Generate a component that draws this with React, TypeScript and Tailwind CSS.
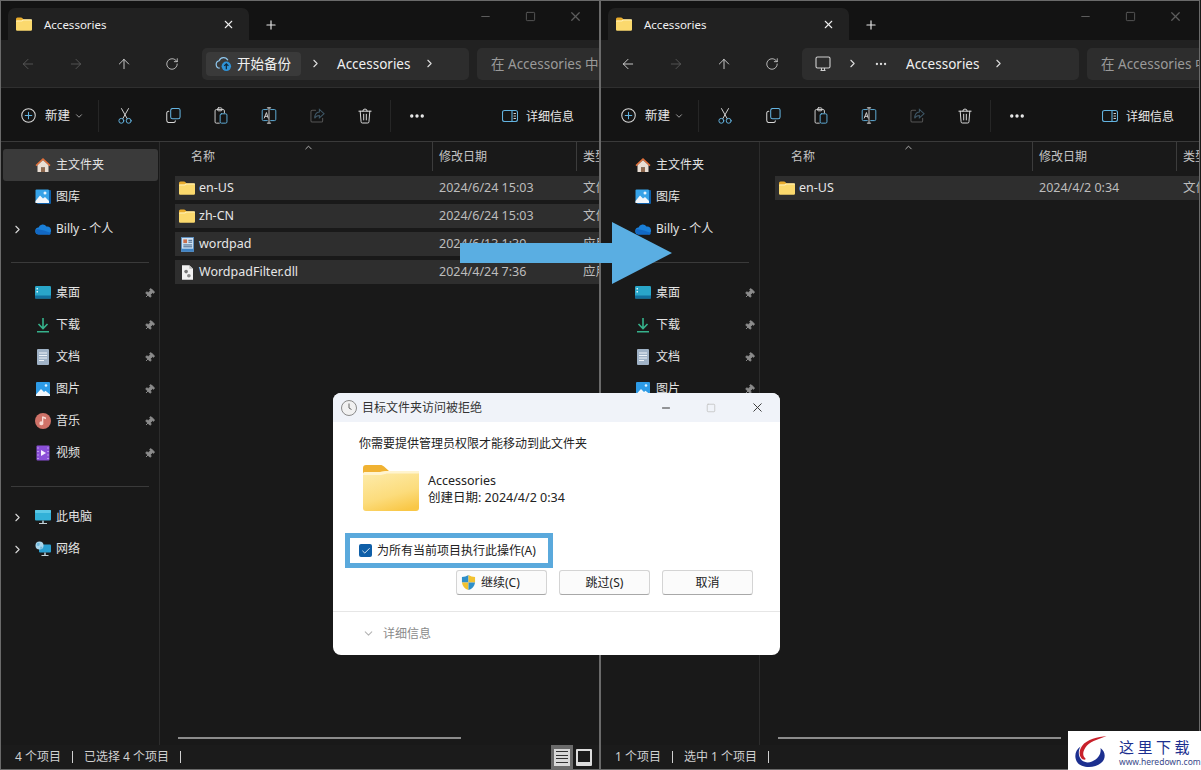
import React from 'react';
import { X, Plus, Minus, Square, ArrowLeft, ArrowRight, ArrowUp, RotateCw, ChevronRight, ChevronDown, ChevronUp, Ellipsis, Pin, Check } from 'lucide-react';

const Folder = ({ className }: { className: string }) => (
  <svg viewBox="0 0 16 14" className={className}>
    <path d="M0 2a1.5 1.5 0 0 1 1.5-1.5h3.6c.5 0 .8.2 1.1.5L7.6 2.4H14.5A1.5 1.5 0 0 1 16 3.900V6H0z" fill="#e9ac2c" />
    <path d="M0 4.200c0-.5.3-.8.8-.8H5.500L7 2.600h7.500c.9 0 1.500.6 1.500 1.400v8.500c0 .8-.6 1.300-1.500 1.300H1.500C.6 13.800 0 13.300 0 12.500z" fill="#fbd96d" />
    <path d="M0 4.200c0-.5.3-.8.8-.8H5.500L7 2.600h9v1H7.400L5.900 4.400H0z" fill="#fff1b8" />
  </svg>
);

const BigFolder = () => (
  <svg viewBox="0 0 56 46" className="w-[56px] h-[46px]">
    <defs>
      <linearGradient id="bigFolderFill" x1="0.300" y1="0" x2="0.700" y2="1">
        <stop offset="0" stopColor="#fdeaa6" />
        <stop offset="0.600" stopColor="#fcdc7c" />
        <stop offset="1" stopColor="#f9c746" />
      </linearGradient>
    </defs>
    <path d="M0 3a3 3 0 0 1 3-3h14c2 0 3 .6 4 1.500L26 6h27a3 3 0 0 1 3 3v6H0z" fill="#f0b232" />
    <path d="M0 9c0-1 .8-2 2-2h15l6-1h30a3 3 0 0 1 3 3v34a3 3 0 0 1-3 3H3a3 3 0 0 1-3-3z" fill="url(#bigFolderFill)" />
    <path d="M0 9c0-1 .8-2 2-2h15l6-1h33v2.500H24l-6 1.500H0z" fill="#fff4cf" />
  </svg>
);

const Home = () => (
  <svg viewBox="0 0 16 16" className="w-4 h-4">
    <path d="M8 1 .5 8l1 1.200L8 3.300l6.500 5.900 1-1.200z" fill="#e2703a" />
    <path d="M2.500 8.200 8 3.300l5.500 4.900V15H10v-4.500H6V15H2.500z" fill="#eadfd5" />
    <rect x="6" y="10.500" width="4" height="4.500" fill="#8f6a50" />
  </svg>
);

const Gallery = () => (
  <svg viewBox="0 0 16 16" className="w-4 h-4">
    <rect x="2" y="1" width="14" height="14" rx="1" fill="#0f5fa8" />
    <rect x="0.500" y="0.500" width="13.500" height="13.500" rx="1" fill="#36a2e8" />
    <path d="M.5 12 5 6.500l3 3 2-1.500 4 4v2H.5z" fill="#f2f6fa" />
    <circle cx="10" cy="4" r="1.500" fill="#e6f4ff" />
  </svg>
);

const Cloud = () => (
  <svg viewBox="0 0 16 10" className="w-4 h-[11px]">
    <path d="M4 10a3.500 3.500 0 0 1-.5-7A4.500 4.500 0 0 1 11.500 2 3.800 3.800 0 0 1 12.500 10z" fill="#1a7fd8" />
    <path d="M3.500 10a3 3 0 0 1-1.500-5.500L9 6l7 2.500a2.500 2.500 0 0 1-3.500 1.500z" fill="#1268c4" />
  </svg>
);

const Desktop = () => (
  <svg viewBox="0 0 16 14" className="w-4 h-[14px]">
    <rect width="16" height="12.500" rx="1.200" fill="#29a6c9" />
    <rect y="9.500" width="16" height="3" fill="#12709e" />
    <rect x="1.500" y="2" width="1.500" height="1.500" fill="#d8f3fa" />
    <rect x="1.500" y="5" width="1.500" height="1.500" fill="#d8f3fa" />
  </svg>
);

const Download = () => (
  <svg viewBox="0 0 16 16" className="w-4 h-4" fill="none" stroke="#36b28c" strokeWidth="1.600">
    <path d="M8 1v10M3.500 7 8 11.500 12.500 7M2 14.800h12" />
  </svg>
);

const Docs = () => (
  <svg viewBox="0 0 16 16" className="w-4 h-4">
    <rect x="2" y="0" width="12" height="16" rx="1" fill="#9fb2c6" />
    <path d="M4 4h8M4 6.500h8M4 9h8M4 11.500h5" stroke="#eef3f8" strokeWidth="1" />
  </svg>
);

const Pictures = () => (
  <svg viewBox="0 0 16 16" className="w-4 h-4">
    <rect x="1" y="1" width="14" height="14" rx="1" fill="#2d9be6" />
    <path d="M1 13.500 6 8l3 3 1.500-1.200L15 13.500V15H1z" fill="#f3f7fb" />
    <circle cx="11" cy="4.500" r="1.300" fill="#dff1ff" />
  </svg>
);

const Music = () => (
  <svg viewBox="0 0 16 16" className="w-4 h-4">
    <circle cx="8" cy="8" r="8" fill="#cf7268" />
    <path d="M8.300 3.500v6.300a2 2 0 1 1-1.300-1.400V3.500zM8.300 3.500l2.700 1v1.800l-2.700-1z" fill="#f7dcd6" />
  </svg>
);

const Video = () => (
  <svg viewBox="0 0 16 16" className="w-4 h-4">
    <rect x="1.500" y="0.500" width="13" height="15" rx="1" fill="#8a4fd8" />
    <path d="M6 5v6l5-3z" fill="#f6f0ff" />
    <path d="M3 2.500v1M3 6v1M3 9.500v1M3 13v1M13 2.500v1M13 6v1M13 9.500v1M13 13v1" stroke="#d9c6f5" strokeWidth="1.200" />
  </svg>
);

const Computer = () => (
  <svg viewBox="0 0 16 16" className="w-4 h-4">
    <rect y="1" width="16" height="10.500" rx="1" fill="#33b1d8" />
    <rect y="1" width="16" height="3" rx="1" fill="#5cc8e6" />
    <rect x="7" y="11.500" width="2" height="2.500" fill="#8fa4ae" />
    <rect x="4" y="14" width="8" height="1" fill="#c4d0d6" />
  </svg>
);

const Network = () => (
  <svg viewBox="0 0 16 16" className="w-4 h-4">
    <rect x="4" y="3.500" width="12" height="8" rx="1" fill="#2a9fd0" />
    <rect x="9" y="11.500" width="2" height="2.500" fill="#8fa4ae" />
    <rect x="6.500" y="14" width="7" height="1" fill="#c4d0d6" />
    <circle cx="4.500" cy="4.500" r="4" fill="#a9d6ec" />
    <path d="M2.500 1.500 5 2.500 4 5 1.500 4.500zM5.500 5.500l2 .5-1 2-1.500-.5z" fill="#6fb8dc" />
  </svg>
);

const WordpadIcon = () => (
  <svg viewBox="0 0 14 16" className="w-[13px] h-[15px]">
    <rect x="0.500" y="0.500" width="13" height="15" fill="#cfe3f5" stroke="#5d8fc0" />
    <rect x="2.500" y="2.500" width="4" height="4" fill="#c9704e" />
    <path d="M8 3.500h4M8 5.500h4M2.500 8.500h9.500M2.500 10.500h9.500" stroke="#37577e" strokeWidth="1" />
    <rect x="0.500" y="12.500" width="13" height="3" fill="#3f83c4" />
  </svg>
);

const DllIcon = () => (
  <svg viewBox="0 0 12 16" className="w-[11px] h-[15px]">
    <path d="M0 0h8l4 4v12H0z" fill="#f2f2f2" />
    <path d="M8 0v4h4z" fill="#bdbdbd" />
    <circle cx="4.500" cy="7" r="2" fill="#777" />
    <circle cx="7.500" cy="11.500" r="2" fill="#8a8a8a" />
  </svg>
);

const BackupIcon = () => (
  <svg viewBox="0 0 18 18" className="w-[17px] h-[17px]" fill="none">
    <path d="M5 14a4 4 0 0 1-.6-7.900 5 5 0 0 1 9.200-.6" stroke="#8fc7ee" strokeWidth="1.300" />
    <circle cx="12" cy="12" r="5" fill="#2f93d8" />
    <path d="M12 15V9.500M9.800 11.500 12 9.300l2.200 2.200" stroke="#10293c" strokeWidth="1.300" />
  </svg>
);

const Monitor = () => (
  <svg viewBox="0 0 16 16" className="w-4 h-4" fill="none" stroke="#d0d0d0" strokeWidth="1.100">
    <rect x="1" y="1" width="14" height="11" rx="1.500" />
    <path d="M5.500 14.500h5M6.500 12v2.500M9.500 12v2.500" />
  </svg>
);

const stroke = { fill: 'none', strokeWidth: 1.100, strokeLinecap: 'round' as const };

const CutIcon = () => (
  <svg viewBox="0 0 16 20" className="w-[14px] h-[18px]" {...stroke}>
    <path d="M4 1.500 10.500 13M12 1.500 5.500 13" stroke="#d8d8d8" />
    <circle cx="3.800" cy="15.500" r="2.800" stroke="#63b3e0" />
    <circle cx="12.200" cy="15.500" r="2.800" stroke="#63b3e0" />
  </svg>
);

const CopyIcon = () => (
  <svg viewBox="0 0 16 16" className="w-[15px] h-[15px]" {...stroke}>
    <rect x="5" y="0.500" width="10" height="11" rx="2" stroke="#63b3e0" />
    <path d="M3 3.500h-.2A2 2 0 0 0 .8 5.500V13a2.500 2.500 0 0 0 2.500 2.500H8a2 2 0 0 0 2-2" stroke="#d8d8d8" />
  </svg>
);

const PasteIcon = () => (
  <svg viewBox="0 0 16 20" className="w-[14px] h-[17px]" {...stroke}>
    <path d="M6 19H2.500A1.500 1.500 0 0 1 1 17.500V4.500A1.500 1.500 0 0 1 2.500 3h8A1.500 1.500 0 0 1 12 4.500V7" stroke="#d8d8d8" />
    <rect x="4" y="1" width="5" height="3.500" rx="1" stroke="#d8d8d8" />
    <rect x="7" y="8" width="8" height="11" rx="1.500" stroke="#63b3e0" />
  </svg>
);

const RenameIcon = () => (
  <svg viewBox="0 0 18 20" className="w-[16px] h-[17px]" {...stroke}>
    <path d="M7 3H2.500A1.500 1.500 0 0 0 1 4.500v10A1.500 1.500 0 0 0 2.500 16H7M11 3h4.500A1.500 1.500 0 0 1 17 4.500v10a1.500 1.500 0 0 1-1.500 1.500H11" stroke="#63b3e0" />
    <path d="M9 1v18M7 1h4M7 19h4" stroke="#d8d8d8" />
    <path d="M3.500 13 6 6.500 8 13M4.300 11h3" stroke="#d8d8d8" />
  </svg>
);

const ShareIcon = () => (
  <svg viewBox="0 0 16 16" className="w-[15px] h-[15px]" {...stroke}>
    <path d="M6 2.500H2.500A1.500 1.500 0 0 0 1 4v9.500A1.500 1.500 0 0 0 2.500 15H12a1.500 1.500 0 0 0 1.500-1.500V11" stroke="#555" />
    <path d="M10 1.500 15 6l-5 4.500V8C7.500 8 6 9 5 11c0-4 2-6.500 5-6.800z" stroke="#3e5665" />
  </svg>
);

const TrashIcon = () => (
  <svg viewBox="0 0 16 18" className="w-[14px] h-[16px]" {...stroke} stroke="#e0e0e0">
    <path d="M1 3.500h14M5.500 3.500a2.500 2.500 0 0 1 5 0M2.500 3.500l1 12a1.500 1.500 0 0 0 1.500 1.500h6a1.500 1.500 0 0 0 1.500-1.500l1-12M6.500 7v6.500M9.500 7v6.500" />
  </svg>
);

const PlusCircle = () => (
  <svg viewBox="0 0 16 16" className="w-[15px] h-[15px]" {...stroke}>
    <circle cx="8" cy="8" r="7.200" stroke="#d8d8d8" />
    <path d="M8 4.500v7M4.500 8h7" stroke="#63b3e0" />
  </svg>
);

const DetailsIcon = () => (
  <svg viewBox="0 0 16 14" className="w-4 h-[14px]" {...stroke}>
    <rect x="0.500" y="1.500" width="15" height="11" rx="2" stroke="#63b3e0" />
    <path d="M10 1.500v11" stroke="#63b3e0" />
    <path d="M12 4.500h1.500M12 7h1.500M12 9.500h1.500" stroke="#d8d8d8" />
  </svg>
);

const ClockIcon = () => (
  <svg viewBox="0 0 16 16" className="w-4 h-4" fill="none">
    <circle cx="8" cy="8" r="7.500" fill="#f1f1f1" stroke="#8a8a8a" />
    <path d="M8 3.500V8l2.500 1.500" stroke="#666" />
  </svg>
);

const Shield = () => (
  <svg viewBox="0 0 16 16" className="w-[15px] h-[15px]">
    <path d="M8 0C6 1.200 3.500 2 1 2.200V8h7z" fill="#2f8fc9" />
    <path d="M8 0c2 1.200 4.500 2 7 2.200V8H8z" fill="#f2c230" />
    <path d="M1 8h7v8C4 15 1.500 12 1 8z" fill="#f2c230" />
    <path d="M8 8h7c-.5 4-3 7-7 8z" fill="#2f8fc9" />
  </svg>
);

const navTop = [
  { label: '主文件夹', icon: <Home /> },
  { label: '图库', icon: <Gallery /> },
  { label: 'Billy - 个人', icon: <Cloud />, chevron: true },
];

const navPinned = [
  { label: '桌面', icon: <Desktop /> },
  { label: '下载', icon: <Download /> },
  { label: '文档', icon: <Docs /> },
  { label: '图片', icon: <Pictures /> },
  { label: '音乐', icon: <Music /> },
  { label: '视频', icon: <Video /> },
];

const navBottom = [
  { label: '此电脑', icon: <Computer />, chevron: true },
  { label: '网络', icon: <Network />, chevron: true },
];

type NavProps = { label: string; icon: React.ReactNode; chevron?: boolean; pinned?: boolean; active?: boolean };

const NavItem = ({ label, icon, chevron, pinned, active }: NavProps) => (
  <div className={`flex items-center h-[32px] w-[155px] ml-[2px] rounded-[3px] ${active ? 'bg-[#3a3a3a]' : ''}`}>
    <div className="w-[32px] flex items-center justify-center pr-[4px]">
      {chevron && <ChevronRight strokeWidth={2} className="w-[13px] h-[13px] text-[#d8d8d8]" />}
    </div>
    <div className="w-[16px] flex items-center justify-center">{icon}</div>
    <span className="ml-[5px] text-[12px] text-[#e4e4e4]">{label}</span>
    {pinned && <Pin className="w-[11px] h-[11px] ml-auto mr-[3px] rotate-45 text-[#8c8c8c] fill-[#8c8c8c]" />}
  </div>
);

const Sidebar = ({ activeHome }: { activeHome: boolean }) => (
  <div className="w-[159px] shrink-0 border-r border-[#2c2c2c] pt-[7px]">
    {navTop.map((n, i) => (
      <NavItem key={n.label} {...n} active={activeHome && i === 0} />
    ))}
    <div className="h-px bg-[#3a3a3a] mx-[10px] mt-[17px] mb-[14px]" />
    {navPinned.map((n) => (
      <NavItem key={n.label} {...n} pinned />
    ))}
    <div className="h-px bg-[#3a3a3a] mx-[10px] mt-[17px] mb-[14px]" />
    {navBottom.map((n) => (
      <NavItem key={n.label} {...n} />
    ))}
  </div>
);

type Row = { name: string; date: string; type: string; icon: React.ReactNode };

const ToolButton = ({ children }: { children: React.ReactNode }) => (
  <div className="w-[48px] flex items-center justify-center">{children}</div>
);

const Divider = () => <div className="w-px h-[32px] bg-[#262626]" />;

type ExplorerProps = {
  backEnabled: boolean;
  address: React.ReactNode;
  addressWidth: string;
  rows: Row[];
  status: string[];
  activeHome: boolean;
  showViews: boolean;
  searchText: string;
};

const Explorer = ({ backEnabled, address, addressWidth, rows, status, activeHome, showViews, searchText }: ExplorerProps) => (
  <div className="w-[600px] h-[770px] shrink-0 flex flex-col border border-[#6a6a6a] bg-[#191919] overflow-hidden">
    {/* title bar */}
    <div className="h-[39px] shrink-0 flex items-end bg-[#131313] pl-[7px]">
      <div className="w-[241px] h-[32px] bg-[#212121] rounded-t-[7px] flex items-center pl-[8px]">
        <Folder className="w-[16px] h-[14px]" />
        <span className="ml-[12px] mt-[2px] text-[11.5px] text-[#f0f0f0]">Accessories</span>
        <X className="w-[13px] h-[13px] ml-auto mr-[14px] text-[#eeeeee]" />
      </div>
      <Plus className="w-[14px] h-[14px] ml-[15px] mb-[8px] text-[#e8e8e8]" />
      <div className="ml-auto flex items-center h-[39px] self-start pb-[9px] text-[#5c5c5c]">
        <Minus className="w-[13px] h-[13px]" />
        <Square className="w-[11px] h-[11px] ml-[33px]" />
        <X className="w-[15px] h-[15px] ml-[32px] mr-[16px]" />
      </div>
    </div>
    {/* address bar */}
    <div className="h-[48px] shrink-0 flex items-center bg-[#212121] border-b border-[#2f2f2f]">
      <div className="w-[200px] pl-[3px] flex items-center shrink-0">
        <div className="w-[48px] flex justify-center"><ArrowLeft strokeWidth={1.300} className={`w-[16px] h-[16px] ${backEnabled ? 'text-[#e0e0e0]' : 'text-[#5c5c5c]'}`} /></div>
        <div className="w-[48px] flex justify-center"><ArrowRight strokeWidth={1.300} className="w-[16px] h-[16px] text-[#5c5c5c]" /></div>
        <div className="w-[48px] flex justify-center"><ArrowUp strokeWidth={1.300} className="w-[16px] h-[16px] text-[#e0e0e0]" /></div>
        <div className="w-[48px] flex justify-center"><RotateCw strokeWidth={1.300} className="w-[14px] h-[14px] text-[#e0e0e0]" /></div>
      </div>
      <div className={`${addressWidth} h-[32px] shrink-0 rounded-[5px] bg-[#2d2d2d] flex items-center ml-[1px]`}>{address}</div>
      <div className="flex-1 h-[32px] ml-[8px] rounded-l-[5px] bg-[#2d2d2d] flex items-center pl-[14px] pt-[2px] text-[13.5px] text-[#9a9a9a] whitespace-nowrap overflow-hidden">
        {searchText}
      </div>
    </div>
    {/* command bar */}
    <div className="h-[54px] shrink-0 flex items-center bg-[#141414] border-b border-[#3a3a3a] pl-[20px] pt-[2px]">
      <PlusCircle />
      <span className="ml-[9px] mt-[2px] text-[12.5px] text-[#e6e6e6]">新建</span>
      <ChevronDown className="w-[10px] h-[10px] ml-[4px] text-[#bbbbbb]" />
      <div className="ml-[14px]"><Divider /></div>
      <div className="flex items-center ml-[2px]">
        <ToolButton><CutIcon /></ToolButton>
        <ToolButton><CopyIcon /></ToolButton>
        <ToolButton><PasteIcon /></ToolButton>
        <ToolButton><RenameIcon /></ToolButton>
        <ToolButton><ShareIcon /></ToolButton>
        <ToolButton><TrashIcon /></ToolButton>
      </div>
      <div className="ml-[1px]"><Divider /></div>
      <Ellipsis className="w-[18px] h-[18px] ml-[17px] text-[#eeeeee]" strokeWidth={2.500} />
      <div className="ml-[76px]"><DetailsIcon /></div>
      <span className="ml-[8px] mt-[2px] text-[12px] text-[#e6e6e6]">详细信息</span>
    </div>
    {/* body */}
    <div className="flex-1 min-h-0 flex">
      <Sidebar activeHome={activeHome} />
      <div className="flex-1 min-w-0 flex flex-col overflow-hidden">
        <div className="h-[29px] shrink-0 flex text-[12px] text-[#c4c4c4] whitespace-nowrap">
          <div className="w-[273px] shrink-0 flex items-center border-r border-[#3c3c3c] pl-[31px]">
            名称
            <ChevronUp className="w-[11px] h-[11px] self-start ml-auto mr-[118px] text-[#bbbbbb]" />
          </div>
          <div className="w-[144px] shrink-0 flex items-center border-r border-[#3c3c3c] pl-[6px]">修改日期</div>
          <div className="flex items-center pl-[6px]">类型</div>
        </div>
        <div className="flex-1 pt-[5px] pl-[15px] flex flex-col gap-[4px]">
          {rows.map((r) => (
            <div key={r.name} className="h-[24px] shrink-0 flex items-center bg-[#2e2e2e] text-[12.5px] whitespace-nowrap">
              <div className="w-[258px] shrink-0 flex items-center pl-[4px]">
                <div className="w-[16px] flex justify-center">{r.icon}</div>
                <span className="ml-[4px] mt-px text-[#e6e6e6]">{r.name}</span>
              </div>
              <div className="w-[144px] shrink-0 pl-[6px] mt-px text-[#bdbdbd]">{r.date}</div>
              <div className="pl-[6px] mt-px text-[#bdbdbd]">{r.type}</div>
            </div>
          ))}
        </div>
        <div className="w-[283px] h-[2px] ml-[18px] mb-[6px] bg-[#8c8c8c] shrink-0" />
      </div>
    </div>
    {/* status bar */}
    <div className="h-[24px] shrink-0 flex items-center pl-[14px] bg-[#1b1b1b] text-[12px] text-[#d0d0d0]">
      {status.map((s) => (
        <React.Fragment key={s}>
          <span>{s}</span>
          <span className="w-px h-[12px] bg-[#d0d0d0] mx-[11px]" />
        </React.Fragment>
      ))}
      {showViews && (
        <div className="ml-auto flex items-center mr-[3px] self-stretch">
          <div className="w-[22px] self-stretch bg-[#6a6a6a] flex items-center justify-center">
            <div className="w-[16px] h-[17px] bg-[#d8d8d8] flex flex-col justify-evenly px-[2px]">
              <div className="h-px bg-[#333333]" />
              <div className="h-px bg-[#333333]" />
              <div className="h-px bg-[#333333]" />
              <div className="h-px bg-[#333333]" />
            </div>
          </div>
          <div className="w-[16px] h-[17px] ml-[3px] mr-[4px] border-2 border-b-4 border-[#dddddd] rounded-[1px]" />
        </div>
      )}
    </div>
  </div>
);

const leftRows: Row[] = [
  { name: 'en-US', date: '2024/6/24 15:03', type: '文件夹', icon: <Folder className="w-[16px] h-[14px]" /> },
  { name: 'zh-CN', date: '2024/6/24 15:03', type: '文件夹', icon: <Folder className="w-[16px] h-[14px]" /> },
  { name: 'wordpad', date: '2024/6/13 1:39', type: '应用程序', icon: <WordpadIcon /> },
  { name: 'WordpadFilter.dll', date: '2024/4/24 7:36', type: '应用程序扩展', icon: <DllIcon /> },
];

const rightRows: Row[] = [
  { name: 'en-US', date: '2024/4/2 0:34', type: '文件夹', icon: <Folder className="w-[16px] h-[14px]" /> },
];

const leftAddress = (
  <>
    <div className="ml-[4px] w-[95px] h-[24px] rounded-[4px] bg-[#3a3a3a] flex items-center pl-[9px]">
      <BackupIcon />
      <span className="ml-[5px] mt-[2px] text-[13.5px] text-[#f0f0f0]">开始备份</span>
    </div>
    <ChevronRight className="w-[13px] h-[13px] ml-[8px] text-[#dddddd]" />
    <span className="ml-[15px] mt-[2px] text-[13.5px] text-[#f0f0f0]">Accessories</span>
    <ChevronRight className="w-[13px] h-[13px] ml-[13px] text-[#dddddd]" />
  </>
);

const rightAddress = (
  <>
    <div className="ml-[13px]"><Monitor /></div>
    <ChevronRight className="w-[13px] h-[13px] ml-[15px] text-[#dddddd]" />
    <Ellipsis className="w-[14px] h-[14px] ml-[15px] text-[#dddddd]" />
    <span className="ml-[18px] mt-[2px] text-[13.5px] text-[#f0f0f0]">Accessories</span>
    <ChevronRight className="w-[13px] h-[13px] ml-[13px] text-[#dddddd]" />
  </>
);

const Dialog = () => (
  <div className="absolute left-[333px] top-[393px] w-[447px] h-[262px] bg-white rounded-[8px] overflow-hidden flex flex-col text-[#222222] text-[12px]">
    <div className="h-[29px] shrink-0 bg-[#f0f3f9] flex items-center pl-[8px]">
      <ClockIcon />
      <span className="ml-[5px] text-[#333333]">目标文件夹访问被拒绝</span>
      <Minus className="w-[12px] h-[12px] ml-auto text-[#333333]" />
      <Square className="w-[10px] h-[10px] ml-[34px] text-[#c4c4c4]" />
      <X className="w-[15px] h-[15px] ml-[34px] mr-[15px] text-[#333333]" strokeWidth={1.500} />
    </div>
    <div className="pl-[26px] mt-[13px] leading-[18px]">你需要提供管理员权限才能移动到此文件夹</div>
    <div className="flex items-center pl-[30px] mt-[12px]">
      <BigFolder />
      <div className="ml-[9px] leading-[17px] pt-[2px] text-[12.5px]">
        <div>Accessories</div>
        <div>创建日期: 2024/4/2 0:34</div>
      </div>
    </div>
    <div className="ml-[12px] mt-[22px] w-[208px] h-[35px] border-[5px] border-[#5aa9dc] flex items-center pl-[9px]">
      <div className="w-[13px] h-[13px] rounded-[2px] bg-[#0f5fa8] flex items-center justify-center">
        <Check className="w-[10px] h-[10px] text-white" strokeWidth={2} />
      </div>
      <span className="ml-[5px]">为所有当前项目执行此操作(A)</span>
    </div>
    <div className="flex justify-end gap-[12px] mr-[27px] mt-[2px]">
      <div className="w-[91px] h-[25px] rounded-[3px] border border-[#d4d4d4] border-b-[#a8a8a8] bg-[#fbfbfb] flex items-center pl-[4px]">
        <Shield />
        <span className="ml-[5px]">继续(C)</span>
      </div>
      <div className="w-[91px] h-[25px] rounded-[3px] border border-[#d4d4d4] border-b-[#a8a8a8] bg-[#fbfbfb] flex items-center justify-center">跳过(S)</div>
      <div className="w-[91px] h-[25px] rounded-[3px] border border-[#d4d4d4] border-b-[#a8a8a8] bg-[#fbfbfb] flex items-center justify-center">取消</div>
    </div>
    <div className="h-px bg-[#e6e6e6] mt-[16px]" />
    <div className="flex-1 flex items-center pl-[29px] text-[#8a8a8a]">
      <ChevronDown className="w-[13px] h-[13px] text-[#b5b5b5]" />
      <span className="ml-[8px]">详细信息</span>
    </div>
  </div>
);

const Arrow = () => (
  <svg className="absolute left-[460px] top-[222px] w-[212px] h-[62px]" viewBox="0 0 212 62">
    <path d="M0 21h152V0l60 31-60 31V41H0z" fill="#5aaee2" />
  </svg>
);

const Watermark = () => (
  <div className="absolute right-0 bottom-0 w-[133px] h-[39px] bg-white flex items-center pl-[5px]">
    <svg viewBox="5 3 44 36" className="w-[44px] h-[36px] shrink-0">
      <path d="M12.500 16.500C7 20 6 27 9 32c4 6 17 7 24 1 5-4 5-11-.5-15 1 6-2.500 11-8.500 13.500-6 2.500-12-.5-13-6.500-.5-3 0-6 1.500-8.500z" fill="#1c2f8f" />
      <path d="M38.500 6C30 7 19 9 14 16c-3.500 5-3 11 1 13.500 3 .5 3-.5 2-1.500-3-3-2-8 2-12.500 5-5 13-6.500 19.500-9.500z" fill="#c8202a" />
    </svg>
    <div className="ml-[2px] flex flex-col items-start pt-[4px]">
      <span className="text-[15px] leading-[18px] tracking-[3.500px] text-[#1c2f8f]">这里下载</span>
      <span className="text-[8.500px] leading-[12px] text-[#3a4a8a] whitespace-nowrap">www.heredown.com</span>
    </div>
  </div>
);

export default function App() {
  return (
    <div className="relative w-[1201px] h-[770px] overflow-hidden flex bg-[#191919] font-['Noto_Sans','Noto_Sans_CJK_SC',sans-serif]">
      <Explorer
        backEnabled={false}
        address={leftAddress}
        addressWidth="w-[267px]"
        rows={leftRows}
        status={['4 个项目', '已选择 4 个项目']}
        activeHome
        showViews
        searchText="在 Accessories 中搜索"
      />
      <Explorer
        backEnabled
        address={rightAddress}
        addressWidth="w-[277px]"
        rows={rightRows}
        status={['1 个项目', '选中 1 个项目']}
        activeHome={false}
        showViews={false}
        searchText="在 Accessories 中搜索"
      />
      <Arrow />
      <Dialog />
      <Watermark />
    </div>
  );
}
